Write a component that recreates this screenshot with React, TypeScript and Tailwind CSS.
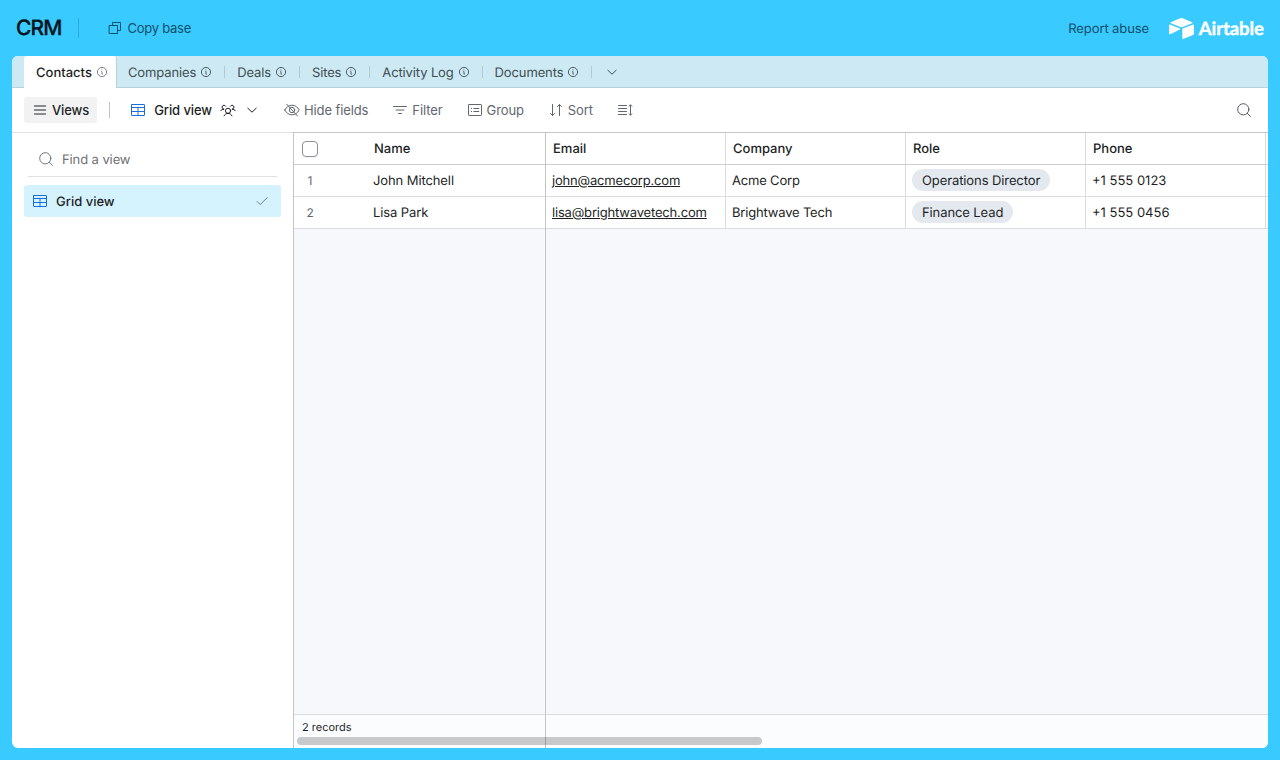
import type { ReactNode } from "react";

const tabs = ["Contacts", "Companies", "Deals", "Sites", "Activity Log", "Documents"];

const columns = ["Email", "Company", "Role", "Phone"];

const records = [
  {
    name: "John Mitchell",
    email: "john@acmecorp.com",
    company: "Acme Corp",
    role: "Operations Director",
    phone: "+1 555 0123",
  },
  {
    name: "Lisa Park",
    email: "lisa@brightwavetech.com",
    company: "Brightwave Tech",
    role: "Finance Lead",
    phone: "+1 555 0456",
  },
];

function Icon({ children, className = "" }: { children: ReactNode; className?: string }) {
  return (
    <svg
      viewBox="0 0 16 16"
      fill="none"
      stroke="currentColor"
      strokeLinecap="round"
      strokeLinejoin="round"
      className={`size-4 shrink-0 ${className}`}
    >
      {children}
    </svg>
  );
}

function InfoIcon() {
  return (
    <svg viewBox="0 0 12 12" fill="none" stroke="currentColor" strokeWidth="0.9" className="size-3 shrink-0">
      <circle cx="6" cy="6" r="4.6" />
      <path d="M5.4 5.5H6v2.8h.6" />
      <circle cx="5.9" cy="3.8" r="0.5" fill="currentColor" stroke="none" />
    </svg>
  );
}

function GridIcon() {
  return (
    <Icon className="text-[#166ee1]">
      <rect x="1.5" y="2.5" width="13" height="11" rx="0.5" />
      <path d="M1.5 5.5h13M1.5 9.5h13" />
      <path d="M8 5.5v8" strokeWidth="1.6" opacity="0.6" />
    </Icon>
  );
}

function CaretIcon() {
  return (
    <Icon>
      <path d="M3.8 6.2 8 10.2l4.2-4" />
    </Icon>
  );
}

function SearchIcon() {
  return (
    <Icon>
      <circle cx="7.3" cy="7.3" r="5.6" />
      <path d="m11.4 11.4 3 3" />
    </Icon>
  );
}

function PeopleIcon() {
  return (
    <Icon>
      <circle cx="8" cy="8.8" r="2.6" />
      <path d="M4.1 13.8C4.7 12.3 6.2 11.4 8 11.4s3.3.9 3.9 2.4" />
      <path d="M12.3 7.2c1.3 0 2.4.6 3.1 1.6M10.3 4.2a2 2 0 1 1 2 3" />
      <path d="M3.7 7.2C2.4 7.2 1.3 7.8.6 8.8M5.7 4.2a2 2 0 1 0-2 3" />
    </Icon>
  );
}

function Logo() {
  return (
    <div className="flex items-center text-white">
      <svg viewBox="11 10 177 149" fill="currentColor" className="h-[21px] w-[25px]">
        <path d="M90.039 12.368 24.079 39.66c-3.667 1.519-3.63 6.729.062 8.192l66.235 26.266a24.58 24.58 0 0 0 18.12 0l66.236-26.266c3.69-1.463 3.729-6.673.062-8.192l-65.96-27.292a24.58 24.58 0 0 0-18.795 0" />
        <path d="M105.312 88.46v65.617c0 3.12 3.147 5.258 6.048 4.108l73.806-28.648a4.42 4.42 0 0 0 2.79-4.108V59.813c0-3.121-3.147-5.258-6.048-4.108l-73.806 28.648a4.42 4.42 0 0 0-2.79 4.108" />
        <path d="m88.078 91.846-21.904 10.576-2.224 1.075-46.238 22.155c-2.93 1.414-6.672-.722-6.672-3.978V60.088c0-1.178.604-2.195 1.414-2.96a5 5 0 0 1 1.12-.84c1.104-.663 2.68-.84 4.02-.31L87.71 83.76c3.564 1.414 3.844 6.408.368 8.087" />
      </svg>
      <svg viewBox="0 0 66 22" fill="currentColor" stroke="currentColor" strokeWidth="0.4" className="ml-1 h-[22px] w-[66px]">
        <text x="0.8" y="18.2" textLength="65" className="font-['Lato',sans-serif] text-[18.5px] font-bold tracking-normal">
          Airtable
        </text>
      </svg>
    </div>
  );
}

function Tool({ icon, label }: { icon: ReactNode; label: string }) {
  return (
    <button className="flex items-center gap-1">
      {icon}
      {label}
    </button>
  );
}

function Header() {
  return (
    <header className="flex h-14 shrink-0 items-center px-4">
      <h1 className="pt-0.5 text-[21px] font-medium tracking-[-0.9px] text-[#04141a] [-webkit-text-stroke:0.3px]">CRM</h1>
      <div className="ml-[17px] h-5 w-px bg-[#2fabd8]" />
      <button className="ml-[28px] flex items-center gap-1 tracking-[-0.25px] text-[#11506a]">
        <Icon>
          <path d="M5.5 5.5v-3h8v8h-3" strokeLinejoin="miter" />
          <path d="M2.5 5.5h8v8h-8z" strokeLinejoin="miter" />
        </Icon>
        Copy base
      </button>
      <a className="mr-5 ml-auto pt-px text-[#11506a]">Report abuse</a>
      <Logo />
    </header>
  );
}

function TabBar() {
  return (
    <nav className="flex h-8 shrink-0 items-center border-b border-[#b4d3dd] bg-[#cdeaf4] pl-3 tracking-[-0.13px] text-[#414d51]">
      {tabs.map((tab, i) =>
        i === 0 ? (
          <div
            key={tab}
            className="-mb-px flex h-8 w-[93px] items-center gap-1 rounded-t-[3px] border-r border-[#b4d3dd] bg-white pl-3 font-medium tracking-normal text-[#1d1f25]"
          >
            <span className="pt-px">{tab}</span>
            <span className="text-[#73767b]">
              <InfoIcon />
            </span>
          </div>
        ) : (
          <div key={tab} className="flex items-center">
            <div className={`flex items-center gap-1 pr-3 ${i === 1 ? "pl-[11px]" : "pl-3"}`}>
              <span className="pt-0.5">{tab}</span>
              <InfoIcon />
            </div>
            <div className="h-3 w-px bg-[#b0cad3]" />
          </div>
        ),
      )}
      <div className="ml-3">
        <CaretIcon />
      </div>
    </nav>
  );
}

function Toolbar() {
  return (
    <div className="flex h-11 shrink-0 items-center pr-4 pl-3 text-[#616670]">
      <button className="flex h-[26px] items-center gap-1 rounded-[3px] bg-[#f2f2f2] px-2 font-medium text-[#1d1f25]">
        <Icon className="text-[#66696d]">
          <path d="M2.5 4h11M2.5 8h11M2.5 12h11" strokeWidth="1.4" />
        </Icon>
        Views
      </button>
      <div className="ml-3 h-4 w-px bg-[#c2c2c4]" />
      <button className="ml-5 flex items-center gap-2 font-medium text-[#1d1f25]">
        <GridIcon />
        Grid view
        <PeopleIcon />
        <CaretIcon />
      </button>
      <div className="ml-6 flex items-center gap-6">
        <Tool
          label="Hide fields"
          icon={
            <Icon>
              <path d="M.8 8C2.3 5 5 3.2 8 3.2S13.7 5 15.2 8C13.7 11 11 12.8 8 12.8S2.3 11 .8 8Z" />
              <circle cx="8" cy="8" r="2.7" />
              <path d="m2.7 2.2 10.8 11.8" />
            </Icon>
          }
        />
        <Tool
          label="Filter"
          icon={
            <Icon>
              <path d="M1.5 4.5h13M4 8h8M6.5 11.5h3" />
            </Icon>
          }
        />
        <Tool
          label="Group"
          icon={
            <Icon>
              <rect x="1.5" y="2.5" width="13" height="11" rx="0.6" />
              <path d="M6.8 6.5h5M6.8 9.5h5M4.4 6.5h.2M4.4 9.5h.2" />
            </Icon>
          }
        />
        <Tool
          label="Sort"
          icon={
            <Icon>
              <path d="M4.5 2.5v11M2.5 11.5l2 2 2-2M11.5 13.5v-11M9.5 4.5l2-2 2 2" />
            </Icon>
          }
        />
        <Icon>
          <path d="M1.5 3.5h8M1.5 6.5h8M1.5 9.5h8M1.5 12.5h8M13.5 3v10M12.2 4.2l1.3-1.4 1.3 1.4M12.2 11.8l1.3 1.4 1.3-1.4" />
        </Icon>
      </div>
      <div className="ml-auto text-[#55585e]">
        <SearchIcon />
      </div>
    </div>
  );
}

function Sidebar() {
  return (
    <aside className="w-[281px] shrink-0 border-t border-[#e2e2e4] px-3">
      <div className="mx-1 flex h-11 items-center gap-2 border-b border-[#dfe0e2] pt-[9px] pl-[10px] text-[#6f7177]">
        <SearchIcon />
        <span className="pt-px">Find a view</span>
      </div>
      <div className="mt-2 flex h-8 items-center gap-2 rounded-[3px] bg-[#d5f2ff] px-2 font-medium tracking-normal text-[#1d1f25]">
        <GridIcon />
        <span className="pt-px">Grid view</span>
        <Icon className="mr-[3px] ml-auto text-[#6c7f88]">
          <path d="m3.2 8.6 3 3 7-7" />
        </Icon>
      </div>
    </aside>
  );
}

function Cell({ children }: { children?: ReactNode }) {
  return (
    <div className="flex w-[180px] shrink-0 items-center border-r border-[#dadce1] pl-1.5 whitespace-nowrap">
      {children}
    </div>
  );
}

function Grid() {
  return (
    <main className="flex min-w-0 flex-1 overflow-hidden border-t border-l border-[#c4c5c9] bg-[#f6f8fc]">
      {/* Frozen primary column */}
      <section className="flex w-[252px] shrink-0 flex-col border-r border-[#c4c5c9]">
        <div className="flex h-8 items-center border-b border-[#cdced2] bg-white pl-2 font-medium tracking-normal">
          <div className="size-4 rounded-[4px] border border-[#8f9095] bg-white shadow-xs" />
          <span className="ml-14">Name</span>
        </div>
        {records.map((record, i) => (
          <div key={record.name} className="flex h-8 items-center border-b border-[#dadce1] bg-white">
            <span className="w-8 text-center text-xs text-[#616670]">{i + 1}</span>
            <span className="ml-[47px]">{record.name}</span>
          </div>
        ))}
        <div className="relative mt-auto h-[34px] border-t border-[#dadce1] bg-[#fbfcfe] pt-1 pl-2 text-[11px] leading-4 tracking-normal">
          2 records
          <div className="absolute top-[22px] left-[3px] h-2 w-[465px] rounded-full bg-black/20" />
        </div>
      </section>

      <section className="flex min-w-0 flex-1 flex-col">
        <div className="flex h-8 border-b border-[#cdced2] bg-white font-medium tracking-normal">
          {columns.map((column) => (
            <Cell key={column}>
              <span className="pl-px">{column}</span>
            </Cell>
          ))}
        </div>
        {records.map((record) => (
          <div key={record.name} className="flex h-8 border-b border-[#dadce1] bg-white">
            <Cell>
              <a className="tracking-[-0.18px] underline">{record.email}</a>
            </Cell>
            <Cell>
              <span className="tracking-[-0.18px]">{record.company}</span>
            </Cell>
            <Cell>
              <span className="mb-px flex h-[22px] items-center rounded-full bg-[#e4e9f0] px-2.5 pt-px">
                {record.role}
              </span>
            </Cell>
            <Cell>
              <span className="tracking-normal">{record.phone}</span>
            </Cell>
          </div>
        ))}
        <div className="mt-auto h-[34px] border-t border-[#dadce1] bg-[#fbfcfe]" />
      </section>
    </main>
  );
}

export default function App() {
  return (
    <div className="flex h-[760px] w-[1280px] flex-col overflow-hidden bg-[#39caff] font-['Inter',sans-serif] text-[13px] leading-[18px] tracking-[-0.1px] text-[#1d1f25] [text-rendering:geometricPrecision]">
      <Header />
      <div className="mx-3 mb-3 flex min-h-0 flex-1 flex-col overflow-hidden rounded-md bg-white">
        <TabBar />
        <Toolbar />
        <div className="flex min-h-0 flex-1">
          <Sidebar />
          <Grid />
        </div>
      </div>
    </div>
  );
}
